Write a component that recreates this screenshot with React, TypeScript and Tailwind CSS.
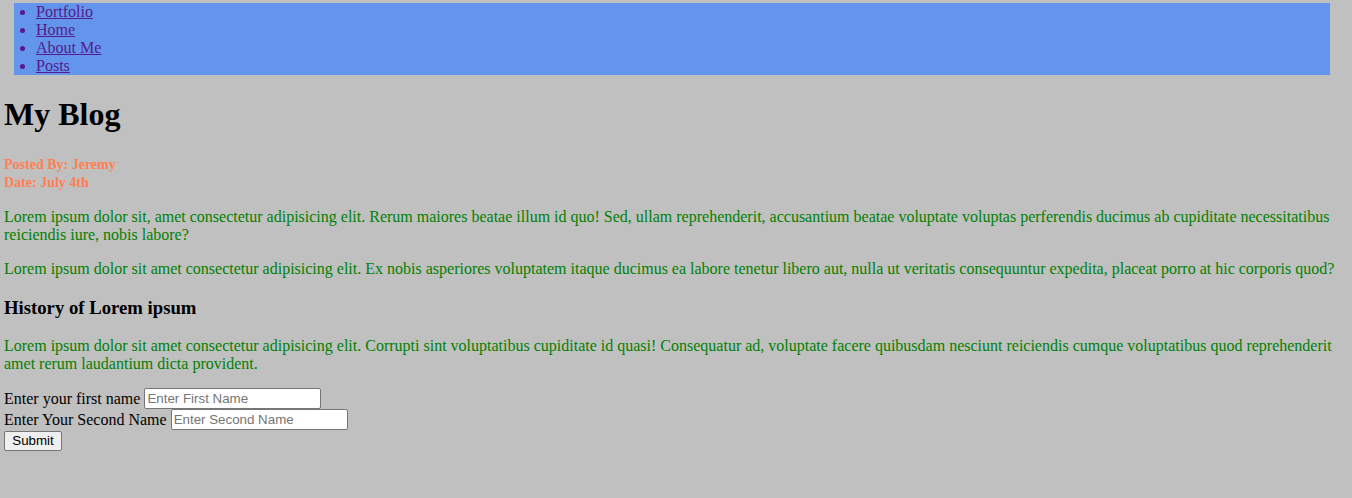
import React from "react";

export default function App() {
  const serif = { fontFamily: '"Liberation Serif", "Times New Roman", serif' };
  const sans = { fontFamily: '"Liberation Sans", Arial, sans-serif' };
  return (
    <div
      className="min-h-screen w-full bg-[#c0c0c0] px-[4px] pt-[3px] pb-[8px] text-black text-[16px]"
      style={serif}
    >
      <ul className="ml-[10px] mr-[18px] bg-[#6495ed] pl-[22px] list-disc text-[#551a8b] leading-[18px]">
        <li><a href="#" className="underline text-[#551a8b]">Portfolio</a></li>
        <li><a href="#" className="underline text-[#551a8b]">Home</a></li>
        <li><a href="#" className="underline text-[#551a8b]">About Me</a></li>
        <li><a href="#" className="underline text-[#551a8b]">Posts</a></li>
      </ul>
      <h1 className="mt-[21px] text-[32px] leading-[37px] font-bold">My Blog</h1>
      <div className="mt-[23px] text-[14px] leading-[18px] font-bold text-[#ff7f50]">
        <div>Posted By: Jeremy</div>
        <div>Date: July 4th</div>
      </div>
      <p className="mt-[16px] leading-[18px] text-[#008000]">
        Lorem ipsum dolor sit, amet consectetur adipisicing elit. Rerum maiores beatae illum id quo! Sed, ullam reprehenderit, accusantium beatae voluptate voluptas perferendis ducimus ab cupiditate necessitatibus reiciendis iure, nobis labore?
      </p>
      <p className="mt-[16px] leading-[18px] text-[#008000]">
        Lorem ipsum dolor sit amet consectetur adipisicing elit. Ex nobis asperiores voluptatem itaque ducimus ea labore tenetur libero aut, nulla ut veritatis consequuntur expedita, placeat porro at hic corporis quod?
      </p>
      <h3 className="mt-[19px] text-[18.72px] leading-[22px] font-bold">History of Lorem ipsum</h3>
      <p className="mt-[18px] leading-[18px] text-[#008000]">
        Lorem ipsum dolor sit amet consectetur adipisicing elit. Corrupti sint voluptatibus cupiditate id quasi! Consequatur ad, voluptate facere quibusdam nesciunt reiciendis cumque voluptatibus quod reprehenderit amet rerum laudantium dicta provident.
      </p>
      <form className="mt-[15px]" onSubmit={(e) => e.preventDefault()}>
        <div className="flex items-center h-[21px]">
          <span className="leading-[18px]">Enter your first name</span>
          <input
            type="text"
            placeholder="Enter First Name"
            className="ml-[4px] w-[177px] h-[21px] bg-white border border-[#767676] rounded-[2px] px-[2px] text-[13.33px] text-black placeholder:text-[#757575] outline-none"
            style={sans}
          />
        </div>
        <div className="flex items-center h-[21px]">
          <span className="leading-[18px]">Enter Your Second Name</span>
          <input
            type="text"
            placeholder="Enter Second Name"
            className="ml-[4px] w-[177px] h-[21px] bg-white border border-[#767676] rounded-[2px] px-[2px] text-[13.33px] text-black placeholder:text-[#757575] outline-none"
            style={sans}
          />
        </div>
        <div className="flex mt-[1px]">
          <button
            type="submit"
            className="h-[20px] w-[58px] bg-[#efefef] border border-[#767676] rounded-[2px] text-[13.33px] leading-[16px] text-black"
            style={sans}
          >
            Submit
          </button>
        </div>
      </form>
    </div>
  );
}
